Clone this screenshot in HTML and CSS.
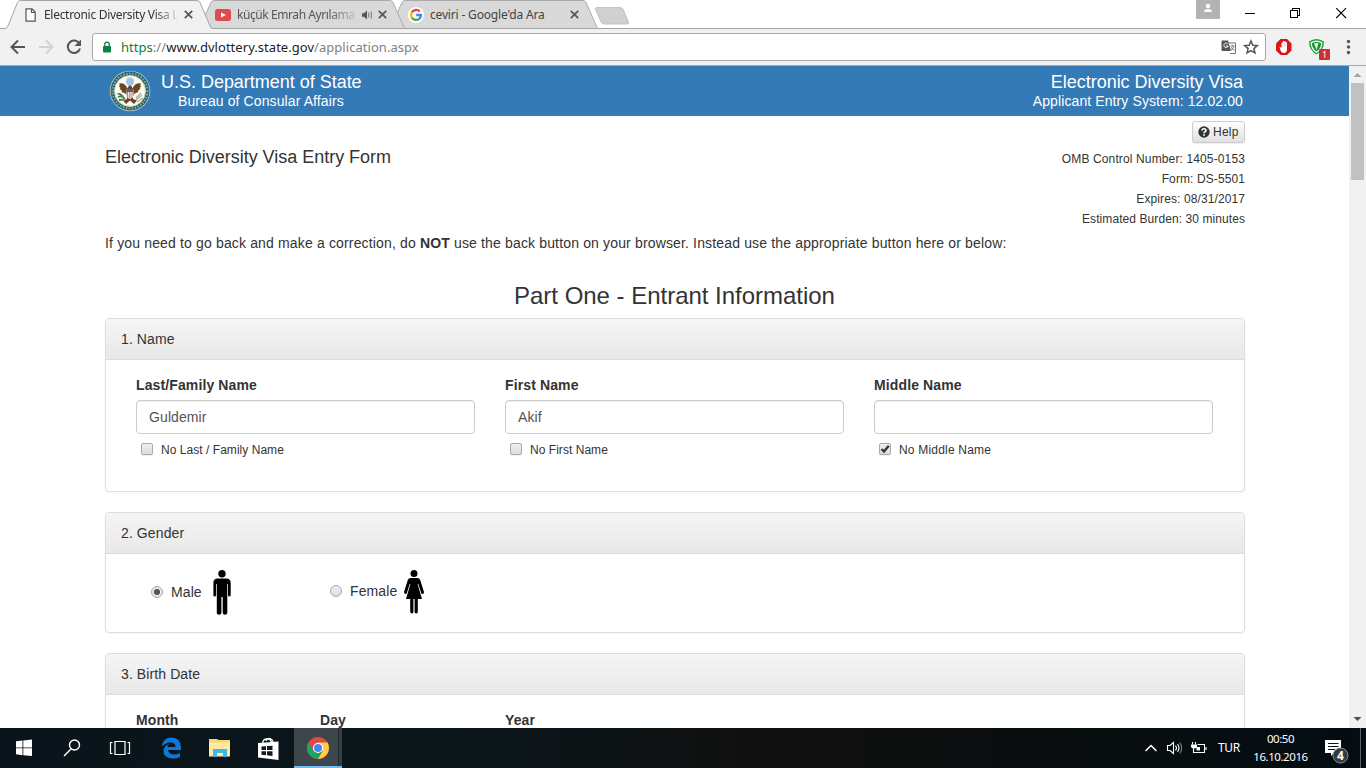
FILE: index.html
```html
<!DOCTYPE html>
<html lang="en">
<head>
<meta charset="utf-8">
<title>Electronic Diversity Visa Lottery</title>
<link rel="stylesheet" href="styles.css">
</head>
<body>
<div class="screen">
  <header class="tabstrip">
    <svg class="tab-shapes" width="640" height="29" viewBox="0 0 640 29">
      <path d="M390 28.500 402 2.500Q403 .5 405 .5H583Q585 .5 586 2.500L597.500 28.500Z" fill="#d9d9d9" stroke="#aaa"/>
      <path d="M199 28.500 211 2.500Q212 .5 214 .5H390Q392 .5 393 2.500L404.500 28.500Z" fill="#d9d9d9" stroke="#aaa"/>
      <path d="M0 28.500H640" stroke="#a5a5a5"/>
      <path d="M0 28.500H5Q7 28 8 26L17.500 2.500Q18.500 .5 20.500 .5H197Q199 .5 200 2.500L210.500 27Q211 28.500 213 28.500V29H0Z" fill="#f1f1f1"/>
      <path d="M0 28.500H5Q7 28 8 26L17.500 2.500Q18.500 .5 20.500 .5H197Q199 .5 200 2.500L210.500 27Q211 28.500 213 28.500" fill="none" stroke="#a5a5a5"/>
      <path d="M597 7.500H620Q622 7.500 623 9L628.500 22Q629 24 627 24H604Q602 24 601 22L595.500 9.500Q595 7.500 597 7.500Z" fill="#d0d0d0" stroke="#c4c4c4"/>
    </svg>
    <div class="tabs">
      <div class="tab tab-one">
        <svg width="12" height="14" viewBox="0 0 12 14"><path d="M1 .8H7L10.200 4V13.200H1ZM6.500 1V4.500H10" fill="#fff" stroke="#555" stroke-width="1.200"/></svg>
        <span class="tab-title t1">Electronic Diversity Visa L</span>
        <svg class="x" width="9" height="9" viewBox="0 0 9 9"><path d="M.8.8 8.200 8.200M8.200.8.800 8.200"/></svg>
      </div>
      <div class="tab tab-two">
        <svg width="16" height="12" viewBox="0 0 16 12"><rect width="16" height="12" rx="2.500" fill="#dd4b50"/><path d="M6 3.500 11 6 6 8.500Z" fill="#fff"/></svg>
        <span class="tab-title t2">küçük Emrah Ayrılama</span>
        <svg class="snd" width="11" height="10" viewBox="0 0 11 10"><path d="M0 3.200H2L5 .5V9.500L2 6.800H0Z" fill="#555"/><path d="M6.800 2.500V7.500M9.300 1.500V8.500" stroke="#777" fill="none"/></svg>
        <svg class="x" width="9" height="9" viewBox="0 0 9 9"><path d="M.8.8 8.200 8.200M8.200.8.800 8.200"/></svg>
      </div>
      <div class="tab tab-three">
        <svg width="16" height="16" viewBox="0 0 16 16"><circle cx="8" cy="8" r="8" fill="#fff"/><g fill="none" stroke-width="2.300"><path d="M11.800 4.600A5 5 0 0 0 3.800 5.400" stroke="#ea4335"/><path d="M3.800 5.400A5 5 0 0 0 3.800 10.600" stroke="#fbbc05"/><path d="M3.800 10.600A5 5 0 0 0 11.200 11.800" stroke="#34a853"/><path d="M11.200 11.800A5 5 0 0 0 13 8H8.200" stroke="#4285f4"/></g></svg>
        <span class="tab-title t3">ceviri - Google'da Ara</span>
        <svg class="x" width="9" height="9" viewBox="0 0 9 9"><path d="M.8.8 8.200 8.200M8.200.8.800 8.200"/></svg>
      </div>
    </div>
    <div class="winctl">
      <svg width="170" height="28" viewBox="0 0 170 28"><rect x="0" y="0" width="24" height="19" fill="#b3b3b3"/><circle cx="12" cy="6" r="2.200" fill="#fff"/><path d="M8 12Q8 9 12 9T16 12Z" fill="#fff"/><g fill="none" stroke="#000" shape-rendering="crispEdges"><path d="M49 13.500H59M94.500 10.500H101.500V17.500H94.500ZM96.500 10.500V8.500H103.500V15.500H101.500"/></g><path d="M140.200 8.200 150 18M150 8.200 140.200 18" stroke="#000" stroke-width="1.100"/></svg>
    </div>
  </header>
  <div class="toolbar">
    <svg class="nav" width="92" height="36" viewBox="0 0 92 36"><g fill="none" stroke-width="2"><path d="M25 18H12M18 11.500 11.500 18 18 24.500" stroke="#555"/><path d="M39 18H52M46 11.500 52.500 18 46 24.500" stroke="#d2d2d2"/><path d="M79.300 14.500A6.200 6.200 0 1 0 80 19.500" stroke="#555"/></g><path d="M81 10.500V17H74.500Z" fill="#555"/></svg>
    <div class="omnibox">
      <svg class="lock" width="10" height="12" viewBox="0 0 10 12"><rect x="1" y="5" width="8" height="6.500" rx=".8" fill="#0b8043"/><path d="M2.800 5.500V3.300a2.200 2.200 0 0 1 4.400 0V5.500" fill="none" stroke="#0b8043" stroke-width="1.300"/></svg>
      <span class="url"><span class="scheme">https</span>://<b>www.dvlottery.state.gov</b>/application.aspx</span>
      <svg class="boxicons" width="40" height="20" viewBox="0 0 40 20"><path d="M7 6H14.500V16.500H9" fill="#fff" stroke="#777"/><path d="M1 3.500H7L10 14H1.500Q.5 14 .5 13V4Z" fill="#555"/><path d="M7 7.200A2.200 2.200 0 1 0 7.200 9H5" fill="none" stroke="#fff"/><path d="M9.500 9H13.500M11.500 8V9M10 13.500 13 9.500M10 10.500 13.500 13.500" stroke="#777" fill="none"/><path d="M30 4 31.800 8.200 36.300 8.600 32.900 11.600 34 16 30 13.600 26 16 27.100 11.600 23.700 8.600 28.200 8.200Z" fill="none" stroke="#555" stroke-width="1.500"/></svg>
    </div>
    <svg class="ext" width="92" height="36" viewBox="0 0 92 36"><path d="M6.500 10H13L17.500 14.500V21.500L13 26H6.500L2 21.500V14.500Z" fill="#d81818"/><path d="M5.500 18 7.500 18.500V14Q8 13 8.500 14L8.700 12.500Q9.500 11.500 10.200 12.500Q11 11.500 11.700 13Q12.800 12.500 13 14V20Q13 24 10 24Q7.500 24 6.500 21.500Z" fill="#fff"/><path d="M8.800 14V18M10.300 13.500V18M11.800 14V18" stroke="#eda0a0" stroke-width=".4"/><path d="M35 12.500Q42.500 7.500 50 12.500Q50 21 42.500 25.500Q35 21 35 12.500Z" fill="#17a53b"/><path d="M37.200 13.700Q42.500 10.500 47.800 13.700Q47.500 20 42.500 23.300Q37.500 20 37.200 13.700Z" fill="#178f35" stroke="#fff" stroke-width="1.200"/><path d="M40 14.500Q42.500 13 44.500 14.500L42.500 21Z" fill="#d9f2d9"/><rect x="45" y="20" width="11" height="11" rx="1" fill="#cc3030"/><g fill="#555"><circle cx="74.500" cy="12.500" r="1.700"/><circle cx="74.500" cy="18" r="1.700"/><circle cx="74.500" cy="23.500" r="1.700"/></g><text x="50.500" y="29" class="badge">1</text></svg>
  </div>

  <div class="viewport">
    <main class="page">
      <div class="banner">
        <svg class="seal" width="42" height="42" viewBox="0 0 42 42"><circle cx="21" cy="21" r="20.300" fill="#cbd09a"/><circle cx="21" cy="21" r="19.500" fill="#1d5f8a"/><circle cx="21" cy="21" r="17.500" fill="none" stroke="#8aa98a" stroke-width="2" stroke-dasharray="1.600 1.400"/><circle cx="21" cy="21" r="15.500" fill="#fbfaf3" stroke="#d8d19c"/><circle cx="21" cy="11.500" r="4" fill="#9cc8e8"/><path d="M18.500 18.500Q16 12.500 10 13.500L11 15.500 9.500 16 11.500 18 10.500 19 13 20.500 12.500 22 15.500 23 18 25V29L14 30.500 17 34 21 30.500 25 34 28 30.500 24 29V25L26.500 23 29.500 22 29 20.500 31.500 19 30.500 18 32.500 16 31 15.500 32 13.500Q26 12.500 23.500 18.500Q22.500 14.500 20 15.500Z" fill="#70431f"/><path d="M9 27Q13 25 16 29M8.500 24Q12 23 14 27M10 30 15 29.500" stroke="#3e8650" stroke-width="1.800" fill="none"/><path d="M27 30 33 25M27 28 32 23M28 32 34 28" stroke="#aaa99a" stroke-width="1.200"/><path d="M17.500 19H24.500V25Q24 28 21 29Q18 28 17.500 25Z" fill="#fff"/><path d="M17.500 19H24.500V22H17.500Z" fill="#41699e"/><path d="M18.500 22V27M20.300 22V28.500M22.100 22V28.500M23.900 22V26" stroke="#dc6c71"/></svg>
        <div class="brand"><div class="big dept">U.S. Department of State</div><div class="small bureau">Bureau of Consular Affairs</div></div>
        <div class="system"><div class="big edv">Electronic Diversity Visa</div><div class="small entry">Applicant Entry System: 12.02.00</div></div>
      </div>
      <div class="container">
        <div class="intro">
          <h4><span class="heading">Electronic Diversity Visa Entry Form</span></h4>
          <div class="meta">
            <button class="help"><svg width="12" height="12" viewBox="0 0 12 12"><circle cx="6" cy="6" r="5.700" fill="#333"/><path d="M4 4.600Q4 2.700 6 2.700T8 4.500Q8 5.500 6.800 6Q6 6.400 6 7.300" fill="none" stroke="#fff" stroke-width="1.600"/><rect x="5.200" y="8.200" width="1.700" height="1.600" fill="#fff"/></svg><span>Help</span></button>
            <div><span class="m1">OMB Control Number: 1405-0153</span></div>
            <div><span class="m2">Form: DS-5501</span></div>
            <div><span class="m3">Expires: 08/31/2017</span></div>
            <div><span class="m4">Estimated Burden: 30 minutes</span></div>
          </div>
        </div>
        <p class="note"><span class="notetext">If you need to go back and make a correction, do <b>NOT</b> use the back button on your browser. Instead use the appropriate button here or below:</span></p>
        <h3><span class="part">Part One - Entrant Information</span></h3>
        <section class="panel name">
          <div class="panel-head"><span>1. Name</span></div>
          <div class="cols">
            <div><label class="lab l1">Last/Family Name</label><div class="field">Guldemir</div><div class="check"><i class="box"></i><span class="c1">No Last / Family Name</span></div></div>
            <div><label class="lab l2">First Name</label><div class="field">Akif</div><div class="check"><i class="box"></i><span class="c2">No First Name</span></div></div>
            <div><label class="lab l3">Middle Name</label><div class="field"></div><div class="check"><i class="box"><svg width="10" height="10" viewBox="0 0 10 10"><path d="M1.500 5 4 7.500 8.800 1.800" fill="none" stroke="#333" stroke-width="2.300"/></svg></i><span class="c3">No Middle Name</span></div></div>
          </div>
        </section>
        <section class="panel gender">
          <div class="panel-head"><span>2. Gender</span></div>
          <div class="genders">
            <div class="choice male"><i class="radio on"></i><span>Male</span><svg width="18" height="45" viewBox="0 0 18 45"><circle cx="9" cy="3.800" r="3.700"/><path d="M4.500 8.500H13.500Q17.700 8.500 17.700 13V25Q17.700 26.500 16.400 26.500T15 25V14H14.300V43Q14.300 44.800 12 44.800T9.700 43V27H8.400V43Q8.400 44.800 6.100 44.800T3.800 43V14H3.100V25Q3.100 26.500 1.700 26.500T.4 25V13Q.4 8.500 4.500 8.500Z"/></svg></div>
            <div class="choice female"><i class="radio"></i><span>Female</span><svg width="20" height="44" viewBox="0 0 20 44"><circle cx="10" cy="3.600" r="3.500"/><path d="M6.500 8H13.500Q15.500 8 16.200 10L20 22Q20 24 18.500 24T17 22.500L14.300 14H13.600L18 29H13.800V42Q13.800 43.400 12.200 43.400T10.600 42V29H9.400V42Q9.400 43.400 7.800 43.400T6.200 42V29H2L6.400 14H5.700L3 22.500Q2.700 24 1.500 24T0 22L3.800 10Q4.500 8 6.500 8Z"/></svg></div>
          </div>
        </section>
        <section class="panel birth">
          <div class="panel-head"><span>3. Birth Date</span></div>
          <div class="dates"><label>Month</label><label>Day</label><label>Year</label></div>
        </section>
      </div>
    </main>
    <aside class="scroll"><svg width="17" height="17" viewBox="0 0 17 17"><path d="M4.500 11 8.500 7 12.500 11Z" fill="#a3a3a3"/></svg><div class="thumb"></div><svg class="down" width="17" height="17" viewBox="0 0 17 17"><path d="M4.500 6 8.500 10 12.500 6Z" fill="#505050"/></svg></aside>
  </div>

  <footer class="taskbar">
    <svg width="294" height="40" viewBox="0 0 294 40">
      <path d="M16 13.300 22.500 12.500V19.400H16ZM23.300 12.400 32 11.500V19.400H23.300ZM16 20.300H22.500V27.200L16 26.300ZM23.300 20.300H32V28L23.300 27.200Z" fill="#fff"/>
      <g fill="none" stroke="#fff" stroke-width="1.400"><circle cx="74.500" cy="17" r="5"/><path d="M71 21 64 28"/><path d="M115 13.500H125V26.500H115ZM112.500 14.500H110.500V25.500H112.500M127.500 14.500H129.500V25.500H127.500" stroke-width="1.200"/></g>
      <path d="M161.500 19Q163 9.500 171.500 9.500Q181 9.500 181 20V22H168Q169 26.500 174 26.500Q177.500 26.500 180 25V29Q177 30.500 172.500 30.500Q163 30 163.500 22Q164 18 169 16Q167.500 18 167.500 19H175.500Q175.500 14.500 170.500 14.500Q165 14.500 161.500 19Z" fill="#0c79d8"/>
      <path d="M209 11H217L218.500 12H230V28H209Z" fill="#f8d775"/><path d="M210 14.500H230V28.500H209V15.500Z" fill="#ffe9a0"/><path d="M213 21H227V29H223V25H217V29H213Z" fill="#42b5e8"/>
      <path d="M258 15 278.500 13.500V32L258 29.500Z" fill="#fff"/><path d="M263 16Q262 12 266 11Q270 10 271.500 14M266 13Q268 9 271 11Q273 12 273 14" fill="none" stroke="#fff" stroke-width="1.300"/><path d="M261.500 18.500 266 18.200V22H261.500ZM267 18.100 272.500 17.700V22H267ZM261.500 23.200H266V27.200L261.500 26.800ZM267 23.200H272.500V28L267 27.300Z" fill="#101a20"/>
    </svg>
    <div class="chrome-task"><svg width="22" height="22" viewBox="0 0 22 22"><circle cx="11" cy="11" r="11" fill="#dd4b3e"/><path d="M1.500 5.500A11 11 0 0 0 11 22L15.800 13.800 6.200 13.800Z" fill="#1da362"/><path d="M20.500 5.500H11L15.800 13.800 11 22A11 11 0 0 0 20.500 5.500Z" fill="#ffce44"/><circle cx="11" cy="11" r="5.100" fill="#fff"/><circle cx="11" cy="11" r="4" fill="#4587f4"/></svg></div>
    <div class="tray">
      <svg width="68" height="40" viewBox="0 0 68 40"><g fill="none" stroke="#fff" stroke-width="1.100"><path d="M1.500 23 7 17.500 12.500 23" stroke-width="1.500"/><path d="M23.500 17.500H26L29.500 14.500V25.500L26 22.500H23.500ZM31.500 17.500Q33.500 20 31.500 22.500M33.500 16Q36.500 20 33.500 24"/><path d="M35.800 14.500Q39.500 20 35.800 25.500" stroke="#78858c"/><path d="M53.500 16.500H60.500V24.500H49.500V20M62 19V22M48.500 14V16.500M51.500 14V16.500"/></g><path d="M47 16.500H53V18Q53 20.500 50 20.500Q47 20.500 47 18ZM52.500 19H56V22.500H52.500Z" fill="#fff"/></svg>
      <span class="lang">TUR</span>
      <div class="clock"><span class="time">00:50</span><span class="date">16.10.2016</span></div>
      <svg class="action" width="30" height="40" viewBox="0 0 30 40"><path d="M2 12H18V25H11L8 28V25H2Z" fill="#fff"/><path d="M5 15.500H15.500M5 18.500H15.500M5 21.500H12" stroke="#0a141a"/><circle cx="17.500" cy="27.500" r="7.500" fill="#343c41" stroke="#8a9194"/><text x="17.500" y="32" class="count">4</text></svg>
      <i class="desk"></i>
    </div>
  </footer>
</div>
</body>
</html>
```

FILE: styles.css
```css
*{box-sizing:border-box}
body{margin:0;font:14px/20px "Liberation Sans",Arial,sans-serif;color:#333;background:#fff}
svg{display:block;flex:none}
span{white-space:nowrap}
.screen{width:1366px;height:768px;overflow:hidden;display:flex;flex-direction:column}
.tabstrip{height:29px;display:flex;justify-content:space-between;position:relative;font:12px/16px "Noto Sans",sans-serif;color:#333;border-bottom:1px solid #a5a5a5;flex:none}
.tab-shapes{position:absolute;left:0;top:0}
.tabs{display:flex;position:relative;height:29px;align-items:center}
.tab{display:flex;align-items:center;height:29px}
.tab-one{padding-left:25px;width:215px}
.tab-two{width:193px;color:#555}
.tab-three{width:190px;color:#444}
.t1{width:133px;margin-left:7px;letter-spacing:-.3px;-webkit-mask-image:linear-gradient(90deg,#000 110px,transparent 137px);mask-image:linear-gradient(90deg,#000 110px,transparent 137px)}
.t2{width:118px;margin-left:6px;letter-spacing:-.42px;-webkit-mask-image:linear-gradient(90deg,#000 90px,transparent 124px);mask-image:linear-gradient(90deg,#000 90px,transparent 124px)}
.t3{width:134px;margin-left:6px;letter-spacing:-.17px}
.x{margin-left:7px;fill:none;stroke:#555;stroke-width:1.7}
.snd{margin-left:7px}
.t2~.x{margin-left:5px}
.t3~.x{margin-left:6px}
.winctl{width:170px}
.toolbar{height:37px;background:#f1f1f1;border-bottom:1px solid #a8a8a8;display:flex;align-items:flex-start;flex:none}
.omnibox{width:1174px;height:28px;margin-top:4px;border:1px solid #a8a8a8;border-radius:3px;background:#fff;display:flex;align-items:center;flex:none}
.lock{margin-left:9px}
.url{font:13px/20px "Noto Sans",sans-serif;letter-spacing:.04px;margin-left:9px;color:#808080;flex:1}
.url b{font-weight:400;color:#222}
.scheme{color:#0b8043}
.boxicons{margin-right:4px}
.ext{margin-left:8px}
.badge{font:9px "Noto Sans",sans-serif;fill:#fff;text-anchor:middle}
.viewport{height:662px;display:flex;overflow:hidden;flex:none}
.page{width:1349px;height:662px;overflow:hidden;letter-spacing:.1px}
.banner{height:50px;background:#337ab7;color:#fff;display:flex;padding:0 106px 0 109px}
.seal{margin-top:4px}
.brand{margin-left:10px;padding-top:6px}
.system{margin-left:auto;text-align:right;padding-top:6px}
.big{font-size:18px;line-height:20px;letter-spacing:-.02px}
.small{font-size:14px;line-height:18px}
.bureau{padding-left:17px}
.container{width:1140px;margin-left:105px}
.intro{display:flex;justify-content:space-between;height:117px}
h4{font-size:18px;line-height:20px;font-weight:400;margin:31px 0 0;letter-spacing:-.02px}
.meta{font-size:12px;text-align:right;padding-top:5px;display:flex;flex-direction:column;align-items:flex-end}
.help{width:53px;height:22px;margin:0 0 6px;padding:0 5px;border:1px solid #ccc;border-radius:3px;background:linear-gradient(#fff,#e0e0e0);box-shadow:0 1px 1px #0001;display:flex;align-items:center;gap:3px;font:12px/18px "Liberation Sans",sans-serif;letter-spacing:.25px;color:#333}
.m1{letter-spacing:.13px}
.m4{letter-spacing:.08px}
.note{margin:0;line-height:20px;letter-spacing:.153px}
h3{font-size:24px;line-height:26px;font-weight:400;text-align:center;margin:30px 1px 9px 0;letter-spacing:-.02px}
.panel{border:1px solid #ddd;border-radius:4px;box-shadow:0 1px 2px rgba(0,0,0,.05);margin-bottom:20px}
.panel-head{height:41px;border-bottom:1px solid #ddd;border-radius:3px 3px 0 0;background:linear-gradient(#f5f5f5,#e8e8e8);padding:10px 15px}
.name{height:174px}.gender{height:121px}.birth{height:120px}
.cols{display:grid;grid-template-columns:339px 339px 339px;gap:30px;padding:15px 30px}
.lab{display:block;font-weight:700;line-height:20px;letter-spacing:.12px}
.field{height:34px;margin-top:5px;border:1px solid #ccc;border-radius:4px;box-shadow:inset 0 1px 1px rgba(0,0,0,.075);padding:6px 12px;color:#555}
.check{display:flex;align-items:center;height:20px;margin-top:6px;padding-left:5px;font-size:12px}
.c1,.c2{letter-spacing:.04px}
.c3{letter-spacing:.2px}
.box{width:12px;height:12px;border:1px solid #aaa;border-radius:2px;background:linear-gradient(#eee,#ddd);margin-right:8px;box-shadow:0 1px 1px #0001;margin-top:-2px}
.genders{display:flex;padding:15px 45px}
.choice{display:flex;align-items:center;height:46px}
.male{width:179px}
.female{height:44px}
.radio{width:12px;height:12px;border:1px solid #aaa;border-radius:50%;background:linear-gradient(#eee,#ddd);margin-right:8px}
.on{background:radial-gradient(circle,#555 0 2.700px,#e7e7e7 3.500px)}
.male svg{margin-left:11.5px}
.female svg{margin-left:6.4px}
.choice svg{margin-top:1px}
.dates{display:grid;grid-template-columns:184px 185px 200px;padding:15px 30px;font-weight:700}
.scroll{width:17px;background:#f1f1f1;display:flex;flex-direction:column}
.thumb{width:13px;height:97px;margin-left:2px;background:#c1c1c1}
.down{margin-top:auto}
.taskbar{height:40px;background:linear-gradient(90deg,#0a151b,#0b161b 35%,#10100f 55%,#0a0d0e 75%,#030d12);display:flex;color:#fff;font:12px/16px "Noto Sans",sans-serif;flex:none}
.chrome-task{width:48px;height:40px;background:linear-gradient(90deg,#3d464b 44px,#20292e 44px,#20292e 45px,#354046 45px);border-bottom:2px solid #76b9ed;padding:9px 13px}
.tray{margin-left:auto;width:222px;display:flex}
.lang{width:33px;padding:12px 0 0 6px;letter-spacing:-.3px}
.clock{width:77px;display:flex;flex-direction:column;align-items:center;padding-top:2px;line-height:18px;font-size:11.5px;letter-spacing:-.45px;margin-left:-3px}
.action{margin-left:4px}
.desk{width:1px;background:#5a6266;margin-left:7px}
.count{font:bold 12px "Noto Sans",sans-serif;fill:#fff;text-anchor:middle}
```
